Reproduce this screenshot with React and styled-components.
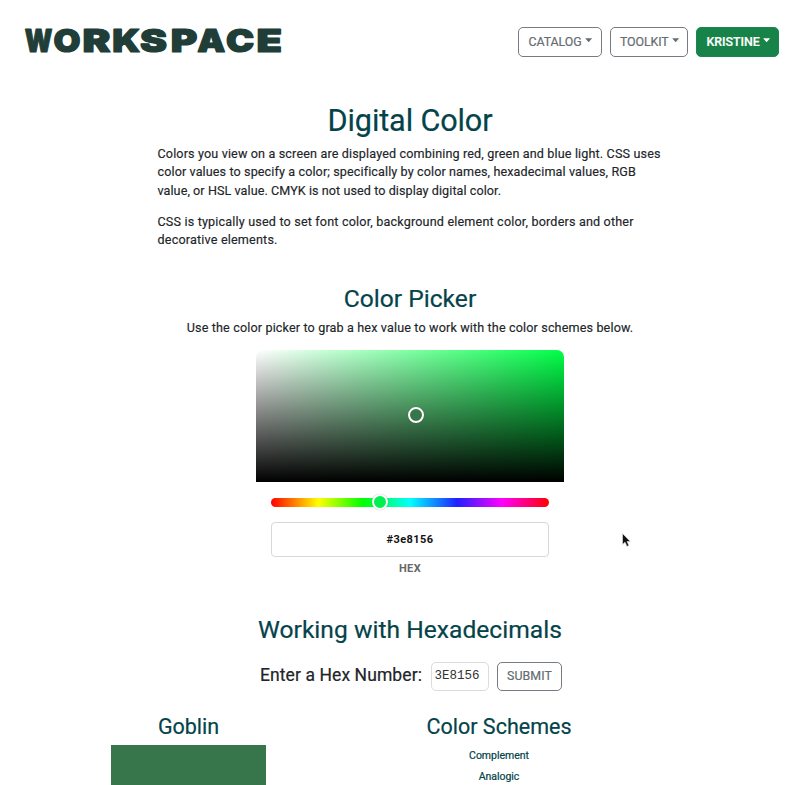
import React from 'react';
import styled, { createGlobalStyle } from 'styled-components';

const GlobalStyle = createGlobalStyle`
  * { box-sizing: border-box; }
  body {
    margin: 0;
    background: #fff;
    color: #212529;
    font-family: Roboto, "Liberation Sans", sans-serif;
    font-size: 12.6px;
    line-height: 18.5px;
    overflow: hidden;
  }
  h1, h2, h3, p { margin: 0; font-weight: 400; }
  button, input { font-family: inherit; }
`;

const Page = styled.div`
  width: 820px;
  height: 785px;
  overflow: hidden;
`;

const Header = styled.header`
  display: flex;
  justify-content: space-between;
  align-items: flex-start;
  padding: 17px 40.7px 0 20px;
  height: 103px;
`;

const Logo = styled.svg`
  display: block;
  width: 270px;
  height: 50px;
  fill: #213d37;
  stroke: #213d37;
  stroke-width: 1.2;
  stroke-linejoin: round;
  font: 900 31.8px Inter, sans-serif;
  overflow: visible;
`;

const Nav = styled.nav`
  display: flex;
  gap: 8px;
  margin-top: 10px;
`;

const Button = styled.button`
  display: flex;
  align-items: center;
  justify-content: center;
  width: ${(p) => p.$width}px;
  height: 29.5px;
  padding: 0 0 0 1px;
  border: 1px solid ${(p) => (p.$primary ? '#198754' : '#747b82')};
  border-radius: 5px;
  background: ${(p) => (p.$primary ? '#178348' : '#fff')};
  color: ${(p) => (p.$primary ? '#fff' : '#666c71')};
  font-size: 12.4px;
  line-height: 18px;
  font-weight: ${(p) => (p.$primary ? 500 : 400)};
  letter-spacing: ${(p) => p.$spacing || 0}px;
  -webkit-text-stroke: 0.2px currentColor;
`;

const Caret = styled.span`
  width: 7px;
  height: 4px;
  margin: -3px 0 0 3.5px;
  background: currentColor;
  clip-path: polygon(0 0, 100% 0, 50% 100%);
`;

const Heading = styled.h2`
  color: #04434a;
  text-align: center;
  font-size: ${(p) => p.$size}px;
  line-height: ${(p) => p.$size * 1.2}px;
  letter-spacing: ${(p) => p.$spacing}px;
  -webkit-text-stroke: 0.2px currentColor;
`;

const Intro = styled.div`
  width: 505px;
  margin: 5px auto 0;
  display: grid;
  gap: 12.3px;
`;

const Line = styled.span`
  display: block;
  white-space: nowrap;
  letter-spacing: ${(p) => p.$spacing}px;
  -webkit-text-stroke: 0.15px currentColor;
`;

const PickerSection = styled.section`
  display: flex;
  flex-direction: column;
  align-items: center;
  margin-top: 34.4px;
`;

const Hint = styled.p`
  margin-top: 6px;
`;

const Saturation = styled.div`
  position: relative;
  width: 308px;
  height: 132px;
  margin-top: 12px;
  border-radius: 7px 7px 0 0;
  background:
    linear-gradient(to top, #000, transparent),
    linear-gradient(to right, #fff, transparent),
    #00ff48;
`;

const Pointer = styled.span`
  position: absolute;
  left: ${(p) => p.$x}px;
  top: ${(p) => p.$y}px;
  width: 16px;
  height: 16px;
  transform: translate(-50%, -50%);
  border: 2px solid #fff;
  border-radius: 50%;
  background: ${(p) => p.$color};
  box-shadow: 0 0 1px rgba(0, 0, 0, 0.35);
`;

const HueBar = styled.div`
  position: relative;
  width: 278px;
  height: 9px;
  margin-top: 16px;
  border-radius: 5px;
  background: linear-gradient(to right, #f00, #ff0 17%, #0f0 33%, #0ff 50%, #2020ff 67%, #f0f 83%, #f00);
`;

const HexInput = styled.input`
  width: 278px;
  height: 35px;
  margin-top: 15px;
  padding: 0;
  border: 1.5px solid #d8d8d8;
  border-radius: 4px;
  text-align: center;
  color: #111;
  font-size: 11px;
  font-weight: 700;
  letter-spacing: 0.4px;
`;

const HexLabel = styled.span`
  margin-top: 3px;
  color: #666;
  font-size: 11px;
  font-weight: 700;
  letter-spacing: 0.4px;
`;

const Hexadecimals = styled.section`
  margin-top: 37px;
`;

const HexForm = styled.form`
  display: flex;
  align-items: center;
  width: 300px;
  margin: 16.6px auto 0;
`;

const Label = styled.label`
  flex: none;
  width: 170.5px;
  padding-bottom: 3px;
  font-size: 17.5px;
  letter-spacing: 0.09px;
  white-space: nowrap;
  -webkit-text-stroke: 0.2px currentColor;
`;

const NumberInput = styled.input`
  && { font-family: "Liberation Mono", monospace; }
  flex: none;
  width: 58px;
  height: 29px;
  margin-right: 8px;
  padding: 0 0 0 3px;
  border: 1px solid #dcdcdc;
  border-radius: 5px;
  color: #333;
  font-size: 12.5px;
`;

const SubmitButton = styled(Button)`
  flex: none;
`;

const Columns = styled.div`
  display: grid;
  grid-template-columns: 155px 466px;
  margin: 23.3px 0 0 111px;
`;

const Swatch = styled.div`
  width: 155px;
  height: 60px;
  margin-top: 4.5px;
  background: #37764b;
`;

const SchemeList = styled.div`
  display: grid;
  justify-items: center;
  margin-top: 6px;
  grid-auto-rows: 21px;
  align-items: center;
`;

const SchemeLink = styled.a`
  color: #04434a;
  font-size: 10.5px;
  letter-spacing: -0.02px;
  -webkit-text-stroke: 0.2px currentColor;
`;

const MouseCursor = styled.svg`
  position: absolute;
  left: 621px;
  top: 532px;
  width: 10px;
  height: 16px;
`;

const LETTERS = [
  ['W', 4.8, 27.6], ['O', 33.6, 27], ['R', 62.6, 28], ['K', 92.3, 28], ['S', 120.1, 27],
  ['P', 150.7, 26.6], ['A', 177.2, 28], ['C', 206, 28.2], ['E', 236.5, 25.5],
];

export default function App() {
  return (
    <Page>
      <GlobalStyle />
      <Header>
        <Logo viewBox="0 0 270 50" aria-label="Workspace">
          {LETTERS.map(([letter, x, width]) => (
            <text key={letter} x={x} y="35.3" textLength={width} lengthAdjust="spacingAndGlyphs">{letter}</text>
          ))}
        </Logo>
        <Nav>
          <Button $width={84} $spacing={-0.06}>CATALOG<Caret /></Button>
          <Button $width={78.5} $spacing={-0.09}>TOOLKIT<Caret /></Button>
          <Button $width={83} $primary $spacing={-0.05}>KRISTINE<Caret /></Button>
        </Nav>
      </Header>

      <Heading as="h1" $size={30.6} $spacing={-0.12}>Digital Color</Heading>
      <Intro>
        <p>
          <Line $spacing={0.14}>Colors you view on a screen are displayed combining red, green and blue light. CSS uses</Line>
          <Line $spacing={0.105}>color values to specify a color; specifically by color names, hexadecimal values, RGB</Line>
          <Line $spacing={0.067}>value, or HSL value. CMYK is not used to display digital color.</Line>
        </p>
        <p>
          <Line $spacing={0.17}>CSS is typically used to set font color, background element color, borders and other</Line>
          <Line $spacing={0.18}>decorative elements.</Line>
        </p>
      </Intro>

      <PickerSection>
        <Heading $size={24.6} $spacing={0}>Color Picker</Heading>
        <Hint><Line $spacing={0.14}>Use the color picker to grab a hex value to work with the color schemes below.</Line></Hint>
        <Saturation><Pointer $x={160.3} $y={65} $color="#37764b" /></Saturation>
        <HueBar><Pointer $x={108.5} $y={4.5} $color="#00f050" /></HueBar>
        <HexInput defaultValue="#3e8156" />
        <HexLabel>HEX</HexLabel>
      </PickerSection>

      <Hexadecimals>
        <Heading $size={24.6} $spacing={0.02}>Working with Hexadecimals</Heading>
        <HexForm>
          <Label>Enter a Hex Number:</Label>
          <NumberInput defaultValue="3E8156" />
          <SubmitButton type="button" $width={65} $spacing={0.1}>SUBMIT</SubmitButton>
        </HexForm>
      </Hexadecimals>

      <Columns>
        <div>
          <Heading as="h3" $size={21.5} $spacing={-0.04}>Goblin</Heading>
          <Swatch />
        </div>
        <div>
          <Heading as="h3" $size={21.5} $spacing={0}>Color Schemes</Heading>
          <SchemeList>
            <SchemeLink>Complement</SchemeLink>
            <SchemeLink>Analogic</SchemeLink>
          </SchemeList>
        </div>
      </Columns>

      <MouseCursor viewBox="0 0 10 16">
        <path d="M1.5 1.5v11l2.6-2.3 1.8 4.2 2-.9-1.8-4h3.2z" fill="#111" stroke="#ddd" strokeWidth=".7" />
      </MouseCursor>
    </Page>
  );
}
